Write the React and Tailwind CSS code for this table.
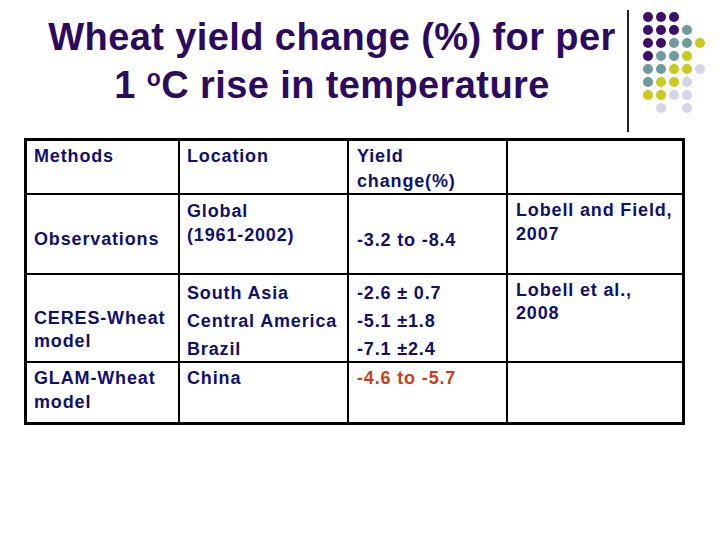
import React from 'react'

const P = 'bg-[#3c0f68]'
const T = 'bg-[#6e9b9b]'
const Y = 'bg-[#c9c91e]'
const L = 'bg-[#d5d5ea]'

const dots = [
  [P, P, P, null, null],
  [P, P, P, T, null],
  [P, P, T, T, Y],
  [P, T, T, Y, null],
  [T, T, Y, Y, L],
  [T, Y, Y, L, null],
  [Y, Y, L, L, null],
  [null, L, null, L, null],
]

const Cell = ({ className = '', children }) => (
  <div className={`bg-white pl-[7px] ${className}`}>{children}</div>
)

const App = () => {
  return (
    <div className="w-[720px] h-[540px] bg-white font-['Liberation_Sans',Arial,sans-serif]">
      {/* title + decoration */}
      <div className="flex h-[138px]">
        <h1 className="ml-[37px] w-[590px] pt-[13px] text-center text-[38px] leading-[48px] font-bold tracking-[0.4px] text-[#2c0b5e]">
          Wheat yield change (%) for per
          <br />
          1 <span className="text-[23px] leading-none align-[12px]">o</span>C rise in temperature
        </h1>
        <div className="mt-[10px] h-[122px] w-[2px] bg-[#222]" />
        <div className="ml-[14px] mt-[12px] grid grid-cols-[10px_10px_10px_10px_10px] auto-rows-[10px] gap-[3px] self-start">
          {dots.flat().map((c, i) => (
            <div key={i} className={`h-[10px] w-[10px] rounded-full ${c || ''}`} />
          ))}
        </div>
      </div>

      {/* table */}
      <div className="ml-[24px] grid w-[661px] grid-cols-[151px_167px_157px_174px] grid-rows-[52px_78px_86px_59px] gap-[2px] border-[3px] border-black bg-black text-[18px] font-bold tracking-[0.85px] text-[#10106e]">
        <Cell className="pt-[3px] pl-[6px] leading-[24px]">Methods</Cell>
        <Cell className="pt-[3px] leading-[24px]">Location</Cell>
        <Cell className="pt-[3px] pl-[8px] leading-[25px]">
          Yield
          <br />
          change(%)
        </Cell>
        <Cell />

        <Cell className="pt-[32px] pl-[6px] leading-[24px]">Observations</Cell>
        <Cell className="pt-[4px] leading-[24px]">
          Global
          <br />
          (1961-2002)
        </Cell>
        <Cell className="pt-[33px] pl-[8px] leading-[24px]">-3.2 to -8.4</Cell>
        <Cell className="pt-[3px] pl-[8px] leading-[24px]">
          Lobell and Field,
          <br />
          2007
        </Cell>

        <Cell className="pt-[32px] pl-[6px] leading-[23px]">
          CERES-Wheat
          <br />
          model
        </Cell>
        <Cell className="pt-[4px] leading-[28px]">
          South Asia
          <br />
          Central America
          <br />
          Brazil
        </Cell>
        <Cell className="pt-[4px] pl-[8px] leading-[28px]">
          -2.6 ± 0.7
          <br />
          -5.1 ±1.8
          <br />
          -7.1 ±2.4
        </Cell>
        <Cell className="pt-[4px] pl-[8px] leading-[23px]">
          Lobell et al.,
          <br />
          2008
        </Cell>

        <Cell className="pt-[3px] pl-[6px] leading-[24px]">
          GLAM-Wheat
          <br />
          model
        </Cell>
        <Cell className="pt-[3px] leading-[24px]">China</Cell>
        <Cell className="pt-[3px] pl-[8px] leading-[24px] text-[#d03c14]">-4.6 to -5.7</Cell>
        <Cell />
      </div>
    </div>
  )
}

export default App
